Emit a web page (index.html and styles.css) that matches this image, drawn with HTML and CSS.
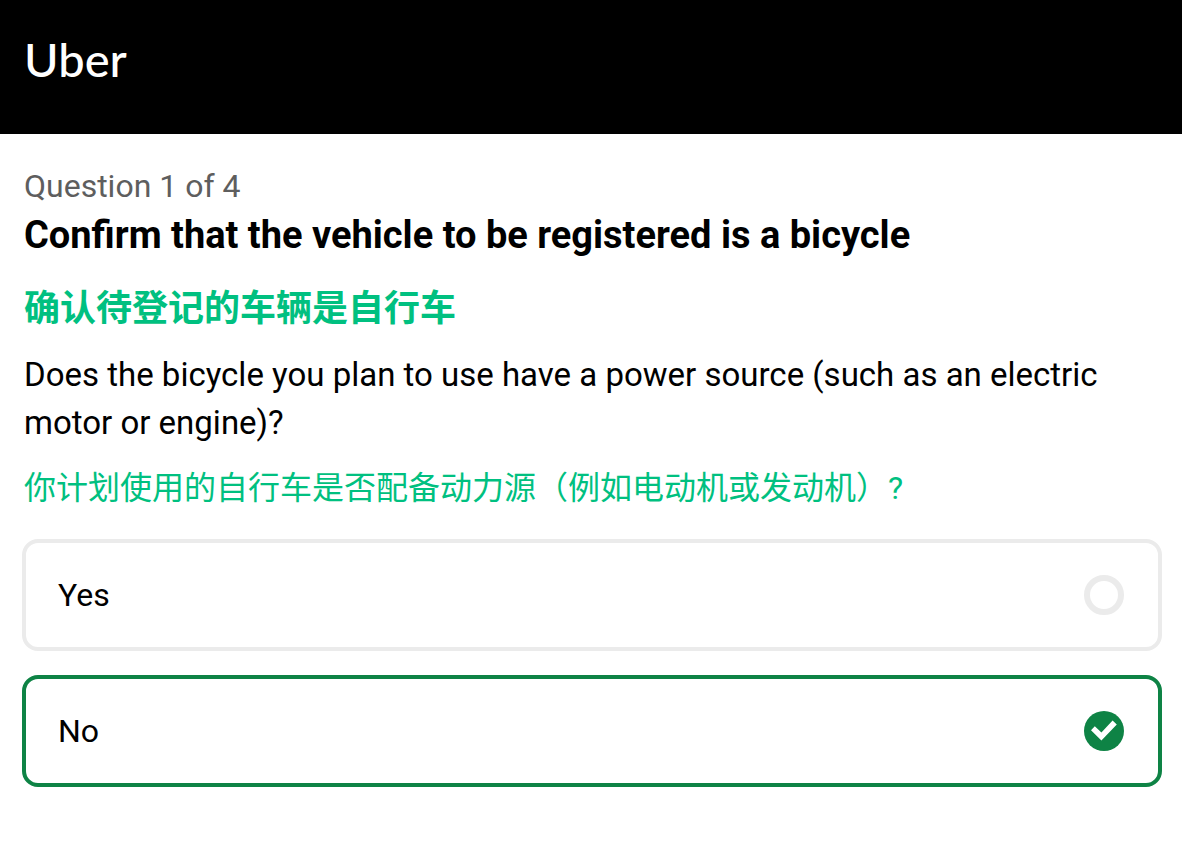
FILE: index.html
```
<!DOCTYPE html>
<html lang="en">
    <head>
        <meta charset="utf-8">
        <meta name="viewport" content="width=device-width, initial-scale=1">
        <title>Uber - Vehicle Registration</title>

        <link rel="stylesheet" href="styles.css">
    </head>

    <body>
        <header class="top-bar">
            <span class="logo">Uber</span>
        </header>

        <main class="question">
            <div class="question-text">
                <p class="step">Question 1 of 4</p>
                <h1 class="title">Confirm that the vehicle to be registered is a bicycle</h1>
                <p class="title-translation" lang="zh-CN">确认待登记的车辆是自行车</p>
                <p class="detail" id="detail">Does the bicycle you plan to use have a power source (such as an electric motor or engine)?</p>
                <p class="detail-translation" lang="zh-CN">你计划使用的自行车是否配备动力源（例如电动机或发动机）?</p>
            </div>

            <div class="options" role="radiogroup" aria-labelledby="detail">
                <label class="option">
                    <span>Yes</span>
                    <input class="option-radio" type="radio" name="power" value="yes">
                </label>
                <label class="option">
                    <span>No</span>
                    <input class="option-radio" type="radio" name="power" value="no" checked>
                </label>
            </div>
        </main>
    </body>
</html>
```

FILE: styles.css
```
* {
    box-sizing: border-box;
}

body {
    margin: 0;

    font-family: Roboto, "Noto Sans CJK SC", sans-serif;
    font-size: 32px;
    line-height: 48px;

    color: black;
    background-color: white;
}

.top-bar {
    padding: 31px 24px 47px;

    color: white;
    background-color: black;
}

.logo {
    display: block;

    font-family: Lato, sans-serif;
    font-size: 47px;
    font-weight: 500;
    line-height: 56px;
}

.question {
    padding: 28px 20px 24px 22px;
}

.question-text {
    padding: 0 2px;
    margin-bottom: 27px;
}

.step,
.title,
.title-translation,
.detail,
.detail-translation {
    margin: 0;
}

.step {
    color: rgb(94, 94, 94);
}

.title {
    font-size: 38px;
    font-weight: 700;
    line-height: 50px;
}

.title-translation {
    margin: 25px 0 18px;

    font-size: 36px;
    font-weight: 700;
    color: rgb(0, 192, 128);
}

.detail {
    font-size: 33px;
}

.detail-translation {
    margin-top: 17px;

    color: rgb(0, 192, 128);
}

.options {
    display: flex;
    flex-direction: column;
    gap: 24px;
}

.option {
    display: flex;
    justify-content: space-between;
    align-items: center;
    padding: 28px 34px 28px 32px;

    border: 4px solid rgb(235, 235, 235);
    border-radius: 16px;
    cursor: pointer;
}

.option:has(.option-radio:checked) {
    border-color: rgb(14, 131, 69);
}

.option-radio {
    appearance: none;
    flex-shrink: 0;
    height: 40px;
    width: 40px;
    margin: 0;

    border: 6px solid rgb(235, 235, 235);
    border-radius: 50%;
    cursor: pointer;
}

.option-radio:checked {
    border: none;
    background-color: rgb(14, 131, 69);
}

/* white check mark */
.option-radio:checked::before {
    content: "";
    display: block;
    height: 100%;
    width: 100%;

    background-color: white;
    clip-path: polygon(17.5% 48%, 27% 38%, 43.5% 54%, 71.5% 24%, 82% 34%, 43.5% 74%);
}
```
